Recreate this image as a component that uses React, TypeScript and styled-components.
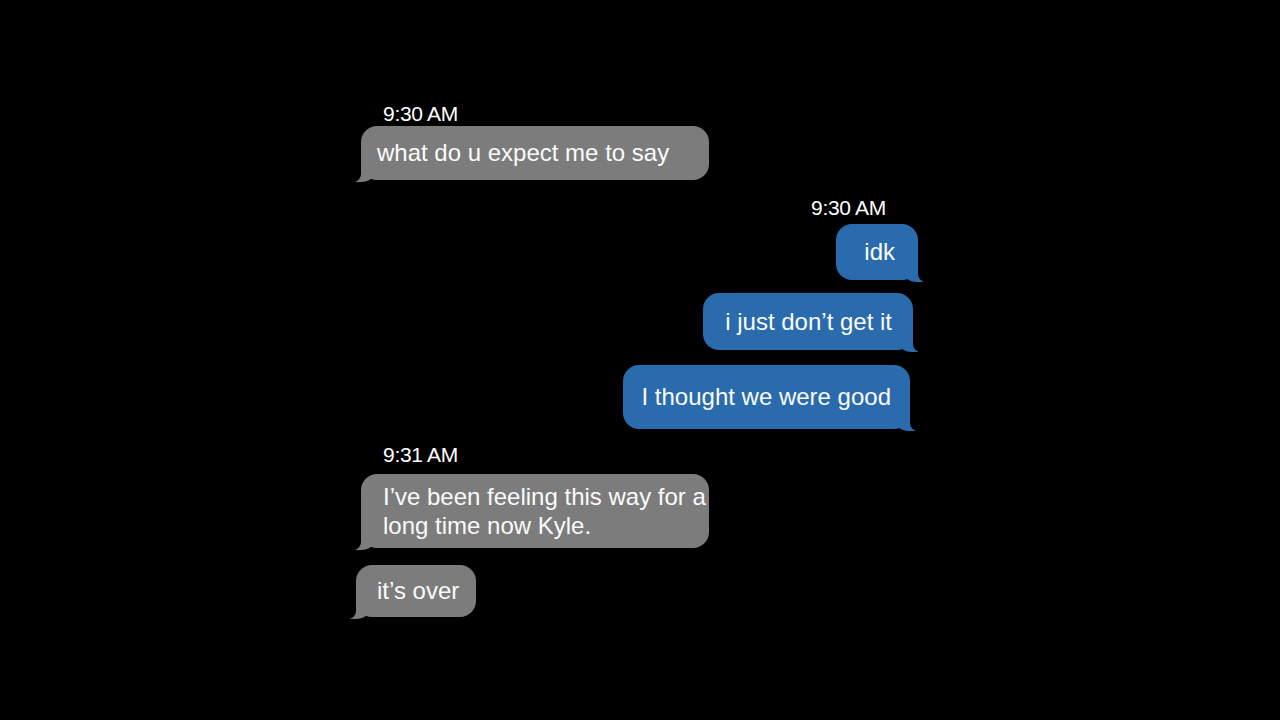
import React from 'react'
import styled, { createGlobalStyle, css } from 'styled-components'

const GlobalStyle = createGlobalStyle`
  html, body {
    margin: 0;
    padding: 0;
    background: #000;
  }
  body {
    font-family: "Liberation Sans", Arial, sans-serif;
    -webkit-font-smoothing: antialiased;
  }
`

type Side = 'left' | 'right'

const GRAY = '#7c7c7c'
const BLUE = '#2a6bad'

const Screen = styled.div`
  width: 1280px;
  height: 720px;
  background: #000;
  overflow: hidden;
`

const Thread = styled.div`
  display: flex;
  flex-direction: column;
  width: 567px;
  margin-left: 353px;
  padding-top: 103px;
`

const Row = styled.div<{ $side: Side; $offset: number; $top: number }>`
  display: flex;
  justify-content: ${(p) => (p.$side === 'left' ? 'flex-start' : 'flex-end')};
  margin-top: ${(p) => p.$top}px;
  ${(p) =>
    p.$side === 'left'
      ? css`padding-left: ${p.$offset}px;`
      : css`padding-right: ${p.$offset}px;`}
`

const Timestamp = styled.span`
  font-size: 21px;
  line-height: 21px;
  color: #fff;
  letter-spacing: -0.3px;
`

const Bubble = styled.div<{ $side: Side; $pad: string; $w?: number; $lh?: number }>`
  position: relative;
  box-sizing: border-box;
  ${(p) => p.$w && css`width: ${p.$w}px;`}
  padding: ${(p) => p.$pad};
  border-radius: 16px;
  background: ${(p) => (p.$side === 'left' ? GRAY : BLUE)};
  color: #fbfbfb;
  font-size: 24px;
  line-height: ${(p) => p.$lh ?? 28}px;
  white-space: nowrap;

  &::before,
  &::after {
    content: '';
    position: absolute;
    bottom: -2px;
  }

  &::before {
    width: 20px;
    height: 18px;
    background: ${(p) => (p.$side === 'left' ? GRAY : BLUE)};
    ${(p) =>
      p.$side === 'left'
        ? css`
            left: -6px;
            border-bottom-right-radius: 14px 10px;
          `
        : css`
            right: -5px;
            border-bottom-left-radius: 14px 10px;
          `}
  }

  &::after {
    width: 16px;
    height: 20px;
    background: #000;
    ${(p) =>
      p.$side === 'left'
        ? css`
            left: -16px;
            border-bottom-right-radius: 8px;
          `
        : css`
            right: -16px;
            border-bottom-left-radius: 8px;
          `}
  }
`

export default function App() {
  return (
    <Screen>
      <GlobalStyle />
      <Thread>
        <Row $side="left" $offset={30} $top={0}>
          <Timestamp>9:30 AM</Timestamp>
        </Row>
        <Row $side="left" $offset={8} $top={2}>
          <Bubble $side="left" $w={348} $pad="13px 0 13px 16px">
            what do u expect me to say
          </Bubble>
        </Row>

        <Row $side="right" $offset={34} $top={17}>
          <Timestamp>9:30 AM</Timestamp>
        </Row>
        <Row $side="right" $offset={2} $top={6}>
          <Bubble $side="right" $pad="14px 23px 14px 28px">
            idk
          </Bubble>
        </Row>
        <Row $side="right" $offset={7} $top={13}>
          <Bubble $side="right" $pad="14.5px 21px 14.5px 22px">
            i just don’t get it
          </Bubble>
        </Row>
        <Row $side="right" $offset={10} $top={15}>
          <Bubble $side="right" $pad="18px 19px 18px 18px">
            I thought we were good
          </Bubble>
        </Row>

        <Row $side="left" $offset={30} $top={15}>
          <Timestamp>9:31 AM</Timestamp>
        </Row>
        <Row $side="left" $offset={8} $top={9}>
          <Bubble $side="left" $w={348} $lh={29} $pad="8px 0 8px 22px">
            I’ve been feeling this way for a
            <br />
            long time now Kyle.
          </Bubble>
        </Row>
        <Row $side="left" $offset={3} $top={17}>
          <Bubble $side="left" $pad="12px 17px 12px 21px">
            it’s over
          </Bubble>
        </Row>
      </Thread>
    </Screen>
  )
}
